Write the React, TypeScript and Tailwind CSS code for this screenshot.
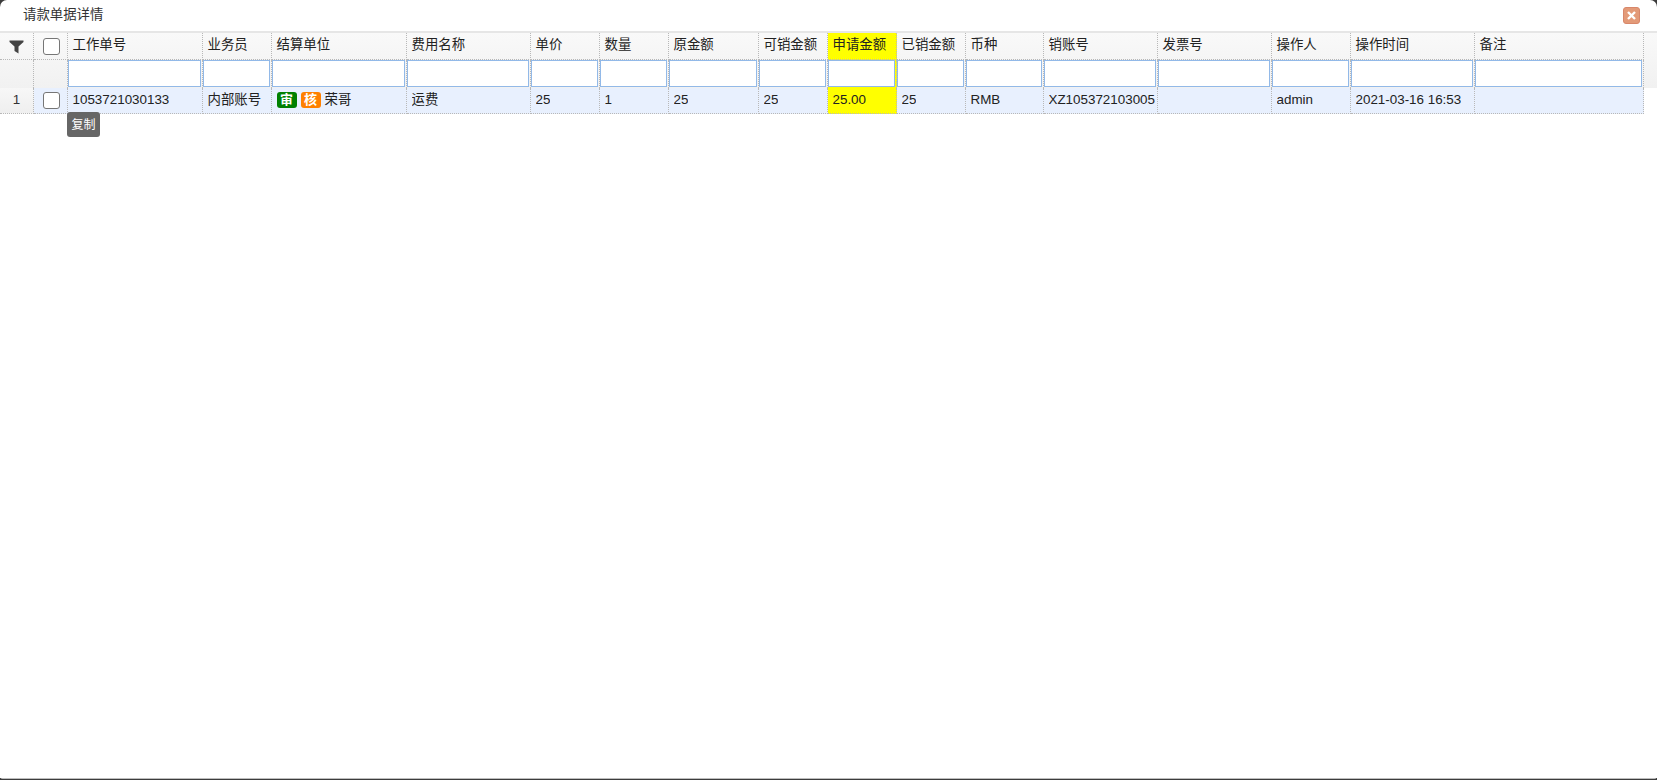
const gridCols =
  "grid grid-cols-[34px_34px_135px_69px_135px_124px_69px_69px_90px_69px_69px_69px_78px_114px_114px_79px_124px_169px]";

const headers = ["工作单号", "业务员", "结算单位", "费用名称", "单价", "数量", "原金额", "可销金额", "申请金额", "已销金额", "币种", "销账号", "发票号", "操作人", "操作时间", "备注"];
const values = ["1053721030133", "内部账号", "", "运费", "25", "1", "25", "25", "25.00", "25", "RMB", "XZ105372103005", "", "admin", "2021-03-16 16:53", ""];
const HIGHLIGHT = 8;

function Funnel() {
  return (
    <svg width="15" height="15" viewBox="0 0 15 15" className="text-[#444]">
      <path d="M0.5 1.5H14.5V3L9.5 7.5V14.5L5.5 12V7.5L0.5 3Z" fill="currentColor" />
    </svg>
  );
}

function Check() {
  return <input type="checkbox" className="appearance-none w-[17px] h-[17px] bg-white border border-[#767676] rounded-[3px]" />;
}

function Close() {
  return (
    <div className="w-[17px] h-[17px] rounded-[3px] bg-[#e39a78] border border-[#d8876a] flex items-center justify-center">
      <svg width="11" height="11" viewBox="0 0 11 11">
        <path d="M2 2L9 9M9 2L2 9" stroke="#fff" strokeWidth="2.4" strokeLinecap="butt" />
      </svg>
    </div>
  );
}

const dotted = "border-r border-b border-dotted border-[#b8b8b8]";

export default function App() {
  return (
    <div className="h-[780px] bg-[#3c3c3c] overflow-hidden font-['Liberation_Sans','Noto_Sans_CJK_SC',sans-serif] text-[13.4px] text-[#222]">
      <div className="h-[779px] bg-white rounded-t-[7px] rounded-b-[3px] border-b border-[#bdbdbd] flex flex-col">
        <div className="h-[31px] shrink-0 flex items-center justify-between pl-[23px] pr-[17px]">
          <span className="text-[#333]">请款单据详情</span>
          <Close />
        </div>
        <div className="border-t-2 border-[#e6e6e6] bg-gradient-to-b from-[#f9f9f9] to-[#f1f1f1] shrink-0">
          <div className={`${gridCols} h-[27px]`}>
            <div className={`${dotted} flex items-center justify-center`}><Funnel /></div>
            <div className={`${dotted} flex items-center justify-center pl-[2px]`}><Check /></div>
            {headers.map((h, i) => (
              <div key={h} className={`${dotted} pl-[4.5px] flex items-center pb-[1px] ${i === HIGHLIGHT ? "bg-[#ffff00]" : ""}`}>{h}</div>
            ))}
          </div>
          <div className={`${gridCols} h-[28px]`}>
            <div className="border-r border-dotted border-[#b8b8b8]" />
            <div className="border-r border-dotted border-[#b8b8b8]" />
            {headers.map((h, i) => (
              <div key={h} className={`border-r border-dotted border-[#b8b8b8] pr-[1px] pb-[1px] ${i === HIGHLIGHT ? "bg-[#ffff00]" : ""}`}>
                <input className="block w-full h-full bg-white border-[1.5px] border-solid border-[#92b9e8] outline-none" />
              </div>
            ))}
          </div>
        </div>
        <div className={`${gridCols} h-[26px] shrink-0`}>
          <div className={`${dotted} bg-gradient-to-b from-[#f7f7f7] to-[#efefef] flex items-center justify-center text-[#333]`}>1</div>
          <div className={`${dotted} bg-[#e8f0fe] flex items-center justify-center pl-[2px]`}><Check /></div>
          {values.map((v, i) => (
            <div key={i} className={`${dotted} relative pl-[4.5px] flex items-center gap-1 whitespace-nowrap ${i === HIGHLIGHT ? "bg-[#ffff00]" : "bg-[#e8f0fe]"}`}>
              {i === 2 ? (
                <div className="flex items-center gap-1">
                  <span className="w-5 h-4 rounded-[3px] bg-[#008000] text-white font-bold text-[13px] leading-4 text-center">审</span>
                  <span className="w-5 h-4 rounded-[3px] bg-[#ff8000] text-white font-bold text-[13px] leading-4 text-center">核</span>
                  <span>荣哥</span>
                </div>
              ) : (
                <span className="overflow-hidden">{v}</span>
              )}
              {i === 0 && (
                <div className="absolute left-[-1px] top-[24px] w-[33px] h-[25px] rounded-[3px] bg-[#666] text-white text-[12px] flex items-center justify-center z-10">复制</div>
              )}
            </div>
          ))}
        </div>
        <div className="flex-1 bg-white" />
      </div>
    </div>
  );
}
